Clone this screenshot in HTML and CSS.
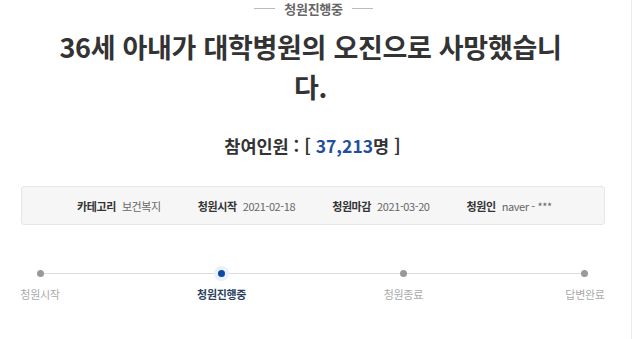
FILE: index.html
```html
<!DOCTYPE html>
<html lang="ko">
<head>
<meta charset="utf-8">
<link rel="stylesheet" href="styles.css">
</head>
<body>
<div class="page">
  <div class="status"><span class="dash"></span><span class="status-text">청원진행중</span><span class="dash"></span></div>
  <h1 class="title">36세 아내가 대학병원의 오진으로 사망했습니<br>다.</h1>
  <p class="count">참여인원 : [ <span class="num">37,213</span>명 ]</p>
  <div class="info">
    <div class="item"><b>카테고리</b><span>보건복지</span></div>
    <div class="item"><b>청원시작</b><span>2021-02-18</span></div>
    <div class="item"><b>청원마감</b><span>2021-03-20</span></div>
    <div class="item"><b>청원인</b><span>naver - ***</span></div>
  </div>
  <div class="progress">
    <div class="track"></div>
    <div class="step"><i class="dot"></i><span>청원시작</span></div>
    <div class="step active"><i class="dot"></i><span>청원진행중</span></div>
    <div class="step"><i class="dot"></i><span>청원종료</span></div>
    <div class="step"><i class="dot"></i><span>답변완료</span></div>
  </div>
</div>
</body>
</html>
```
FILE: styles.css
```css
html, body { margin: 0; padding: 0; background: #fff; }
body { font-family: "Noto Sans CJK KR", "Noto Sans", sans-serif; color: #333; }
.page {
  width: 632px;
  height: 339px;
  border-right: 1px solid #ececec;
  box-sizing: border-box;
  overflow: hidden;
}
.status {
  display: flex;
  align-items: center;
  justify-content: center;
  gap: 9px;
  height: 16px;
  margin-left: -4px;
}
.dash { width: 21px; height: 1px; background: #bbb; }
.status-text { font-size: 13px; font-weight: 700; color: #666; letter-spacing: -0.3px; }
.title {
  margin: 11px 0 0;
  text-align: center;
  font-size: 27px;
  line-height: 40px;
  font-weight: 700;
  color: #333;
  letter-spacing: -0.3px;
  padding-right: 10px;
}
.count {
  margin: 27px 0 0;
  text-align: center;
  font-size: 17.5px;
  line-height: 24px;
  font-weight: 700;
  color: #333;
  padding-right: 6px;
}
.num { color: #1f4f9e; }
.info {
  margin: 28px 26px 0 21px;
  height: 39px;
  box-sizing: border-box;
  background: #f6f6f6;
  border: 1px solid #e6e6e6;
  border-radius: 3px;
  display: flex;
  align-items: center;
  padding-left: 55px;
  gap: 37px;
  font-size: 11px;
  letter-spacing: -0.4px;
}
.item { display: flex; gap: 6px; align-items: baseline; }
.item b { color: #333; font-weight: 700; }
.item span { color: #666; }
.progress {
  position: relative;
  margin-top: 38px;
  width: 625px;
  display: flex;
  justify-content: space-between;
}
.track {
  position: absolute;
  left: 40px;
  right: 40px;
  top: 10px;
  height: 1px;
  background: #ddd;
}
.step {
  position: relative;
  width: 80px;
  display: flex;
  flex-direction: column;
  align-items: center;
  gap: 10px;
}
.dot {
  display: block;
  width: 7px;
  height: 7px;
  border-radius: 50%;
  background: #999;
  margin-top: 7px;
}
.step span { font-size: 11px; color: #aaa; letter-spacing: -0.3px; line-height: 14px; }
.step.active .dot { background: #0b49a6; box-shadow: 0 0 0 4px #eaf1fb; }
.step.active span { color: #2b3f5e; font-weight: 700; }
```
